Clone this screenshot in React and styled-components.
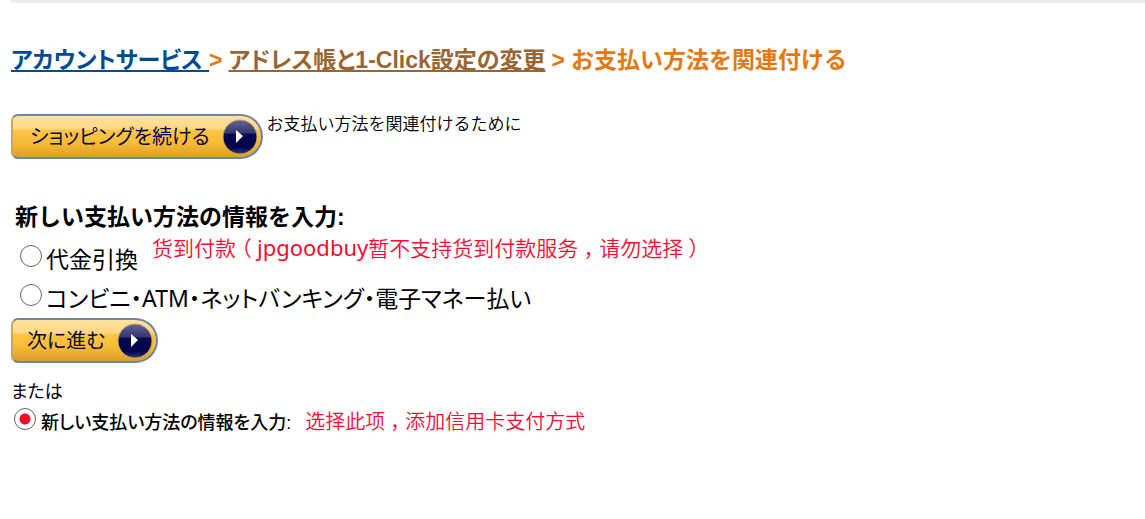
import React from "react";
import styled, { createGlobalStyle } from "styled-components";

const GlobalStyle = createGlobalStyle`
  * { box-sizing: border-box; }
  body {
    margin: 0;
    background: #fff;
    color: #000;
    font-family: "Liberation Sans", "Noto Sans CJK JP", sans-serif;
    font-feature-settings: "palt";
  }
`;

const Page = styled.main`
  padding-left: 11px;
`;

const TopRule = styled.hr`
  height: 3px;
  margin: 0;
  border: 0;
  background: #eee;
`;

const Breadcrumb = styled.nav`
  display: flex;
  flex-wrap: wrap;
  gap: 6px;
  margin-top: 43px;
  font-size: 23px;
  font-weight: 700;
  line-height: 28px;
  color: #e47911;
`;

const Crumb = styled.a`
  color: ${(p) => (p.$visited ? "#996633" : "#004b91")};
  white-space: pre;
  text-decoration: underline;
  text-decoration-thickness: 2px;
  text-decoration-skip-ink: none;
  text-underline-offset: 2px;
`;

const CurrentCrumb = styled.span`
  font-feature-settings: normal;
`;

const Intro = styled.section`
  display: flex;
  align-items: flex-start;
  gap: 4px;
  margin-top: 40px;
`;

const IntroText = styled.p`
  margin: 0;
  font-feature-settings: normal;
  font-size: 17px;
  font-weight: 350;
  line-height: 22px;
`;

const GoldButton = styled.button`
  display: flex;
  align-items: center;
  gap: 12px;
  height: 45px;
  padding: 0 3px 0 ${(p) => (p.$compact ? 14 : 17)}px;
  border: 2px solid #7184a6;
  border-left-color: #c9a75c;
  border-radius: 7px 23px 23px 7px;
  background: linear-gradient(#ffe3a0 0, #ffd880 32%, #fcc648 34%, #f8bb35 65%, #d99f2b 100%);
  color: #0c0845;
  font-family: inherit;
  font-feature-settings: inherit;
  font-size: 20px;
  line-height: 28px;
  white-space: nowrap;
`;

const PaymentForm = styled.form`
  margin: 0;
`;

const Choices = styled.fieldset`
  margin: 44px 0 0;
  padding: 0 0 6px;
  border: 0;
`;

const Legend = styled.legend`
  padding: 0 4px;
  font-feature-settings: normal;
  font-size: 23px;
  font-weight: 700;
  line-height: 28px;
`;

const Choice = styled.div`
  display: flex;
  align-items: flex-start;
  padding: ${(p) => p.$top}px 0 0 9px;
`;

const ChoiceLabel = styled.label`
  display: flex;
  align-items: flex-start;
  gap: 4px;
  padding-top: ${(p) => p.$top}px;
  font-family: "Noto Sans", "Noto Sans CJK JP", sans-serif;
  font-size: 23px;
  line-height: 28px;
`;

const Radio = styled.input`
  appearance: none;
  flex: none;
  width: 22px;
  height: 22px;
  margin: 0;
  border: 1px solid #666;
  border-radius: 50%;
  background: #fff;
  &:checked {
    background: radial-gradient(circle, #f8062c 0 5px, #fff 6px);
  }
`;

const Note = styled.span`
  color: #fa0a32;
  font-family: "Noto Sans", "Noto Sans CJK SC", sans-serif;
  font-feature-settings: normal;
  font-size: ${(p) => p.$size}px;
  font-weight: 350;
  line-height: 28px;
  margin-left: 14px;
`;

const Mark = styled.span`
  display: inline-block;
  width: 1em;
  text-align: center;
  font-feature-settings: "halt";
`;

const Latin = styled.span`
  font-size: 22px;
  font-weight: 400;
`;

const Or = styled.p`
  margin: 17px 0 0;
  font-size: 18px;
  line-height: 24px;
`;

const CardRow = styled.div`
  display: flex;
  align-items: flex-start;
  padding: 4px 0 0 3px;
`;

const CardLabel = styled.label`
  display: flex;
  align-items: flex-start;
  gap: 5px;
  font-size: 18px;
  font-weight: 500;
  line-height: 30px;
`;

function ArrowBadge({ id }) {
  return (
    <svg width="36" height="36" viewBox="0 0 36 36" aria-hidden="true">
      <defs>
        <linearGradient id={id} x1="0" y1="0" x2="0" y2="1">
          <stop offset="0" stopColor="#65659a" />
          <stop offset="0.38" stopColor="#34346f" />
          <stop offset="0.42" stopColor="#08084f" />
          <stop offset="0.8" stopColor="#02024c" />
          <stop offset="1" stopColor="#343477" />
        </linearGradient>
      </defs>
      <circle cx="18" cy="18" r="17" fill={`url(#${id})`} stroke="#c6a967" />
      <path d="M14 11 L21 17 L14 24 Z" fill="#fff" />
    </svg>
  );
}

export default function App() {
  return (
    <>
      <GlobalStyle />
      <Page lang="ja">
        <TopRule />
        <Breadcrumb>
          <span>
            <Crumb href="#account">{"アカウントサービス "}</Crumb>&gt;
          </span>
          <Crumb href="#address" $visited>アドレス帳と1-Click設定の変更</Crumb>
          <span>&gt;</span>
          <CurrentCrumb>お支払い方法を関連付ける</CurrentCrumb>
        </Breadcrumb>
        <Intro>
          <GoldButton type="button">
            ショッピングを続ける
            <ArrowBadge id="continue-badge" />
          </GoldButton>
          <IntroText>お支払い方法を関連付けるために</IntroText>
        </Intro>
        <PaymentForm>
          <Choices>
            <Legend>新しい支払い方法の情報を入力:</Legend>
            <Choice $top={2}>
              <ChoiceLabel $top={12}>
                <Radio type="radio" name="payment" />
                代金引換
              </ChoiceLabel>
              <Note lang="zh-CN" $size={21}>
                货到付款<Mark>（</Mark><Latin>jpgoodbuy</Latin>暂不支持货到付款服务<Mark>，</Mark>请勿选择<Mark>）</Mark>
              </Note>
            </Choice>
            <Choice $top={0}>
              <ChoiceLabel $top={11}>
                <Radio type="radio" name="payment" />
                コンビニ・ATM・ネットバンキング・電子マネー払い
              </ChoiceLabel>
            </Choice>
          </Choices>
          <GoldButton type="button" $compact>
            次に進む
            <ArrowBadge id="next-badge" />
          </GoldButton>
          <Or>または</Or>
          <CardRow>
            <CardLabel>
              <Radio type="radio" name="payment" defaultChecked />
              新しい支払い方法の情報を入力:
            </CardLabel>
            <Note lang="zh-CN" $size={20}>
              选择此项<Mark>，</Mark>添加信用卡支付方式
            </Note>
          </CardRow>
        </PaymentForm>
      </Page>
    </>
  );
}
